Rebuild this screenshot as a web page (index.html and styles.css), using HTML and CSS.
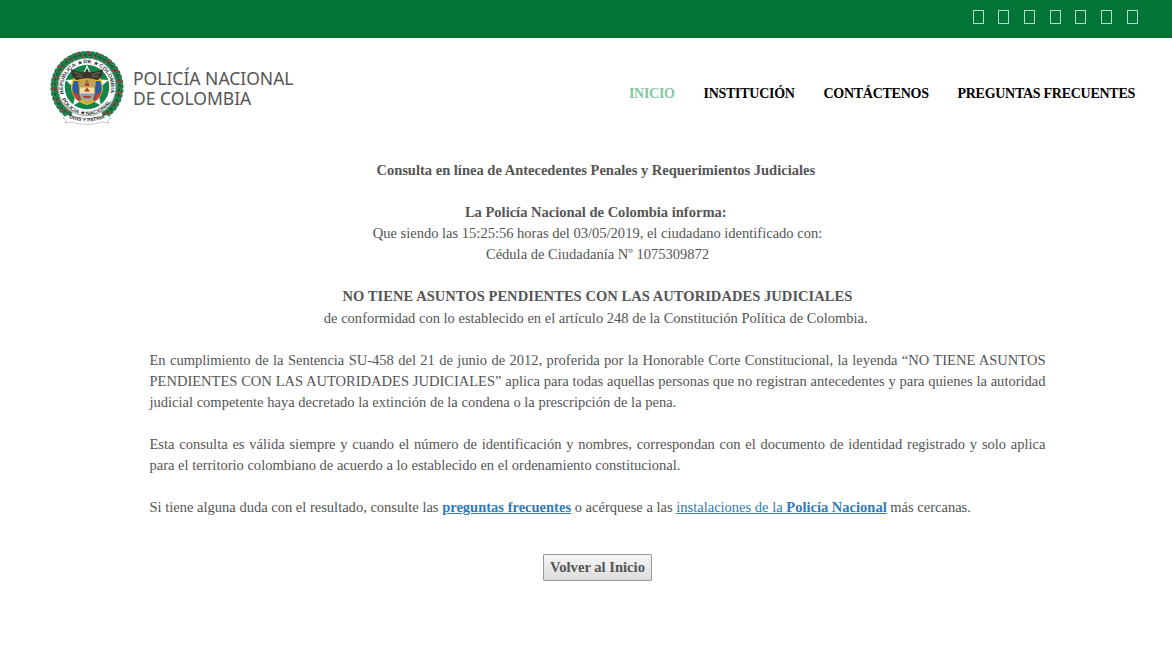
FILE: index.html
```html
<!DOCTYPE html>
<html lang="es">
<head>
<meta charset="utf-8">
<title>Policía Nacional de Colombia</title>
<link rel="stylesheet" href="styles.css">
</head>
<body>
<div class="topbar">
  <i class="social"></i><i class="social"></i><i class="social"></i><i class="social"></i><i class="social"></i><i class="social"></i><i class="social"></i>
</div>
<header class="header">
  <div class="brand">
    <svg class="crest" viewBox="0 0 76 76" width="76" height="76">
      <defs>
        <path id="arcTop" d="M15 44 A24 24 0 1 1 61 44"/>
        <path id="arcLow" d="M12.700 49 A28 28 0 0 0 63.300 49"/>
        <path id="motto" d="M20 68 Q38 75 56 68"/>
      </defs>
      <g fill="none">
        <path d="M22 65.500 A32.500 32.500 0 1 1 54 65.500" stroke="#217a4a" stroke-width="6.500"/>
        <path d="M21 68 A35 35 0 1 1 55 68" stroke="#217a4a" stroke-width="3" stroke-dasharray="3.500 1.300"/>
        <path d="M22 65.500 A32.500 32.500 0 1 1 54 65.500" stroke="#5b9a73" stroke-width="5" stroke-dasharray=".8 4.300"/>
        <path d="M22 65.500 A32.500 32.500 0 1 1 54 65.500" stroke="#0d5932" stroke-width="2" stroke-dasharray="2.500 2.600"/>
        <path d="M23 67 A34 34 0 1 1 53 67" stroke="#c3322f" stroke-width="2.200" stroke-dasharray="2 9.500"/>
        <path d="M23 64 A31 31 0 1 1 53 64" stroke="#c3322f" stroke-width="1.800" stroke-dasharray="1.800 10" stroke-dashoffset="6"/>
      </g>
      <path d="M18 65 L14 68 L17 70 L16 73 L23 72 Q38 77 53 72 L60 73 L59 70 L62 68 L58 65 Q38 72 18 65Z" fill="#fff" stroke="#9ba29b" stroke-width=".6"/>
      <circle cx="38" cy="37" r="28.800" fill="#fff" stroke="#315b44" stroke-width=".5"/>
      <circle cx="38" cy="37" r="22.300" fill="#10864a"/>
      <path d="M38 14.500 L44 29 L59.500 30 L48.500 40 L52 55.500 L38 48 L24 55.500 L27.500 40 L16.500 30 L32 29Z" fill="#f5f8f3"/>
      <path d="M25 27 Q19 38 25 47 Q30 53 38 55 Q46 53 51 47 Q57 38 51 27Z" fill="#e8ba36"/>
      <path d="M25 31 Q21 39 26 47 L32 51 L29 31Z" fill="#275fa2"/>
      <path d="M51 31 Q55 39 50 47 L44 51 L47 31Z" fill="#275fa2"/>
      <path d="M23 41 L27 49 L31 52 L29 45Z M53 41 L49 49 L45 52 L47 45Z" fill="#cf3d32"/>
      <path d="M30 31 H46 V43 Q45 50 38 53 Q31 50 30 43Z" fill="#e9c34c" stroke="#a56a2b" stroke-width=".8"/>
      <path d="M31 32 H45 V37 H31Z" fill="#b9a565"/>
      <path d="M31 38 H45 V43 H31Z" fill="#e9dcc0"/>
      <path d="M31 44 H45 Q44 49 38 51 Q32 49 31 44Z" fill="#78a8bd"/>
      <path d="M36 33 h4 v3 h-4Z M35 41.500 L38 37.500 L41 41.500Z M34 46 h8 l-1 2 h-6Z" fill="#be382e"/>
      <path d="M38 18 L40 22 Q47 23 54 19 L53 26 L49 30 L42 29 L38 32 L34 29 L27 30 L23 26 L22 19 Q29 23 36 22Z" fill="#39352d"/>
      <path d="M25 22 L33 25 M51 22 L43 25 M27 26 L33 27 M49 26 L43 27" stroke="#8b8068" stroke-width=".8"/>
      <path d="M30 29.500 Q38 27 46 29.500 L45 31.500 Q38 30 31 31.500Z" fill="#cda83e"/>
      <g class="seal">
        <text><textPath href="#arcTop" textLength="88" lengthAdjust="spacingAndGlyphs">REPUBLICA ★ DE ★ COLOMBIA</textPath></text>
        <text><textPath href="#arcLow" textLength="60" lengthAdjust="spacingAndGlyphs">POLICIA ★ NACIONAL</textPath></text>
        <text><textPath href="#motto" textLength="37" lengthAdjust="spacingAndGlyphs">DIOS Y PATRIA</textPath></text>
      </g>
    </svg>
    <div class="brand-name"><span class="name-a">POLICÍA NACIONAL</span><span class="name-b">DE COLOMBIA</span></div>
  </div>
  <nav class="nav"><a class="active">INICIO</a><a>INSTITUCIÓN</a><a>CONTÁCTENOS</a><a>PREGUNTAS FRECUENTES</a></nav>
</header>
<main class="content">
  <div class="centered">
    <div class="shift title"><b>Consulta en línea de Antecedentes Penales y Requerimientos Judiciales</b></div>
    <br>
    <div class="shift"><b>La Policía Nacional de Colombia informa:</b></div>
    <div>Que siendo las 15:25:56 horas del 03/05/2019, el ciudadano identificado con:</div>
    <div>Cédula de Ciudadanía Nº 1075309872</div>
    <br>
    <div class="verdict"><b>NO TIENE ASUNTOS PENDIENTES CON LAS AUTORIDADES JUDICIALES</b></div>
    <div class="shift article">de conformidad con lo establecido en el artículo 248 de la Constitución Política de Colombia.</div>
  </div>
  <p>En cumplimiento de la Sentencia SU-458 del 21 de junio de 2012, proferida por la Honorable Corte Constitucional, la leyenda “NO TIENE ASUNTOS PENDIENTES CON LAS AUTORIDADES JUDICIALES” aplica para todas aquellas personas que no registran antecedentes y para quienes la autoridad judicial competente haya decretado la extinción de la condena o la prescripción de la pena.</p>
  <p>Esta consulta es válida siempre y cuando el número de identificación y nombres, correspondan con el documento de identidad registrado y solo aplica para el territorio colombiano de acuerdo a lo establecido en el ordenamiento constitucional.</p>
  <p>Si tiene alguna duda con el resultado, consulte las <a class="link"><b>preguntas frecuentes</b></a> o acérquese a las <a class="link">instalaciones de la <b>Policía Nacional</b></a> más cercanas.</p>
  <button class="back">Volver al Inicio</button>
</main>
</body>
</html>
```
FILE: styles.css
```css
* { box-sizing: border-box; }
body { margin: 0; background: #fff; color: #555; font: 14.53px/21.07px "Liberation Serif", serif; }
.topbar { height: 38px; background: #007536; border-bottom: 2px solid #007034; display: flex; justify-content: flex-end; align-items: flex-start; gap: 14.7px; padding: 10px 34.3px 0 0; }
.social { width: 11px; height: 14px; border: 1px solid #b5dccb; }
.header { display: flex; justify-content: space-between; align-items: flex-start; height: 122px; padding: 12px 37px 0 49px; }
.brand { display: flex; gap: 8px; }
.crest { display: block; }
.seal { font: bold 5px "Liberation Sans", sans-serif; fill: #333; }
.brand-name { display: flex; flex-direction: column; padding-top: 18px; font: 17.5px/20px "Noto Sans", sans-serif; color: #555; }
.nav { display: flex; gap: 28.8px; padding-top: 32px; font-weight: bold; color: #000; font-size: 14px; letter-spacing: -.27px; line-height: 23px; white-space: nowrap; }
.active { color: #84c9a0; }
.content { width: 896px; margin-left: 149.5px; display: flex; flex-direction: column; }
.centered { text-align: center; }
.shift { padding-right: 3.5px; }
.verdict { letter-spacing: .05px; }
.article { padding-top: .5px; margin-bottom: -.5px; }
p { margin: 21.07px 0 0; text-align: justify; }
.link { color: #337ab7; text-decoration: underline; }
.back { align-self: center; margin-top: 35.8px; width: 109px; height: 27px; padding: 0; border: 1px solid #999; border-radius: 1px; background: linear-gradient(#f6f6f6, #dcdcdc); color: #555; font: bold 14.6px "Liberation Serif", serif; }
```
